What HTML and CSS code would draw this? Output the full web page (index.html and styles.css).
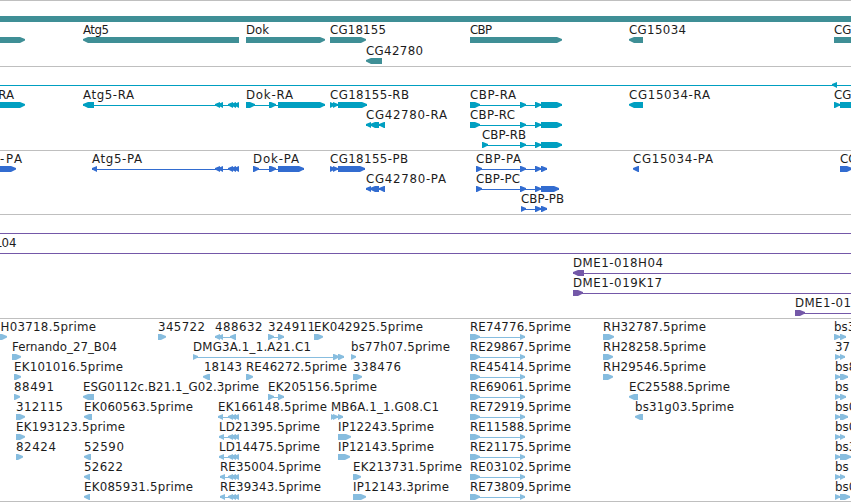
FILE: index.html
```
<!DOCTYPE html>
<html lang="en">
<head>
    <meta charset="UTF-8">
    <title>Genome Browser</title>
    <link rel="stylesheet" href="styles.css">
</head>
<body>
    <main class="browser">
        <svg class="track genes" id="genes" width="851" height="66"></svg>
        <svg class="track transcripts" id="transcripts" width="851" height="84"></svg>
        <svg class="track proteins" id="proteins" width="851" height="64"></svg>
        <svg class="track clones" id="clones" width="851" height="104"></svg>
        <svg class="track ests" id="ests" width="851" height="183"></svg>
    </main>
    <script src="tracks.js"></script>
</body>
</html>
```
FILE: styles.css
```
body {
    margin: 0;
    background-color: #fff;
    overflow: hidden;
}

.browser {
    display: flex;
    flex-direction: column;
    width: 851px;
    height: 502px;
    box-sizing: border-box;
    border-bottom: 1px solid #bfbfbf;
}

.track {
    display: block;
    flex: none;
    overflow: hidden;
}

.divider {
    fill: #bfbfbf;
}

.label {
    font-family: "DejaVu Sans", sans-serif;
    font-size: 11.8px;
    fill: #1c1c1c;
}

/* Track colors */
.genes {
    color: #3f8f96;
}

.transcripts {
    color: #009fc1;
}

.proteins {
    color: #326cd0;
}

.clones {
    color: #7458a8;
}

.ests {
    color: #87bddf;
}

.intron,
.exon {
    fill: currentColor;
}
```
FILE: tracks.js
```
const SVG_NS = "http://www.w3.org/2000/svg";

// feature: [row, label, label start, label end, direction, exons]
// a null label start aligns the text to its end, a null end leaves its natural width
const tracks = {
    genes: {
        top: 37, pitch: 21,
        lines: [{ y: 16, height: 6 }],
        features: [
            [0, "", 0, 0, 1, [[-9, 25]]],
            [0, "Atg5", 83, 109, -1, [[83, 239]]],
            [0, "Dok", 246, 269, 1, [[246, 325]]],
            [0, "CG18155", 330, 386, 1, [[330, 366]]],
            [1, "CG42780", 366, 423, -1, [[366, 382]]],
            [0, "CBP", 470, 492, 1, [[470, 562]]],
            [0, "CG15034", 629, 686, -1, [[629, 643]]],
            [0, "CG", 834, null, 1, [[834, 870]]]
        ]
    },
    transcripts: {
        top: 36, pitch: 20,
        lines: [{ y: 19, height: 1 }],
        features: [
            [-1, "", 0, 0, -1, [[832, 837]]],
            [0, "RA", null, 14, 1, [[-9, 25]]],
            [0, "Atg5-RA", 83, 134, -1, [[83, 94], [215, 220], [218, 223], [228, 233], [231, 236], [234, 239]]],
            [0, "Dok-RA", 246, 293, 1, [[246, 255], [269, 276], [278, 325]]],
            [0, "CG18155-RB", 330, 409, 1, [[330, 335], [333, 338], [338, 367]]],
            [1, "CG42780-RA", 366, 447, -1, [[366, 371], [370, 379], [379, 385]]],
            [0, "CBP-RA", 470, 516, 1, [[470, 480], [520, 526], [535, 541], [541, 562]]],
            [1, "CBP-RC", 470, 515, 1, [[470, 480], [520, 526], [535, 541], [541, 562]]],
            [2, "CBP-RB", 482, 526, 1, [[482, 488], [520, 526], [535, 541], [541, 562]]],
            [0, "CG15034-RA", 629, 710, -1, [[629, 643]]],
            [0, "CG", 834, null, 1, [[834, 840], [840, 870]]]
        ]
    },
    proteins: {
        top: 16, pitch: 20,
        lines: [],
        features: [
            [0, "-PA", 0, 22, 1, [[-9, 16]]],
            [0, "Atg5-PA", 92, 142, -1, [[92, 97], [215, 220], [218, 223], [228, 233], [231, 236], [234, 239]]],
            [0, "Dok-PA", 253, 299, 1, [[253, 259], [269, 276], [278, 304]]],
            [0, "CG18155-PB", 330, 408, 1, [[330, 335], [333, 338], [338, 365]]],
            [1, "CG42780-PA", 366, 446, -1, [[366, 371], [370, 379], [379, 385]]],
            [0, "CBP-PA", 476, 521, 1, [[476, 482], [520, 526], [535, 541], [541, 547]]],
            [1, "CBP-PC", 476, 520, 1, [[476, 482], [520, 526], [535, 541], [541, 559]]],
            [2, "CBP-PB", 521, 564, 1, [[521, 526], [535, 541], [541, 547]]],
            [0, "CG15034-PA", 633, 713, -1, [[633, 639]]],
            [0, "CG", 840, null, 1, [[840, 852]]]
        ]
    },
    clones: {
        top: 16, pitch: 20,
        lines: [{ y: 19, height: 1 }, { y: 39, height: 1 }],
        features: [
            [1, "L04", null, 16.5, 1, []],
            [2, "DME1-018H04", 573, 663, -1, [[573, 584], [860, 870]]],
            [3, "DME1-019K17", 573, 662, 1, [[573, 583], [860, 870]]],
            [4, "DME1-01", 795, 851, 1, [[795, 805], [860, 870]]]
        ]
    },
    ests: {
        top: 16, pitch: 20,
        lines: [],
        features: [
            [0, "H03718.5prime", 0.5, 96, 1, [[-2, 7]]],
            [0, "345722", 158, 205, 1, [[158, 166]]],
            [0, "488632", 215, 262.5, -1, [[215, 220], [218, 223], [230, 236]]],
            [0, "324911", 268, 315, 1, [[268, 274], [278, 284]]],
            [0, "EK042925.5prime", 314, 423, 1, [[314, 323]]],
            [0, "RE74776.5prime", 470, 571, 1, [[470, 480], [520, 525]]],
            [0, "RH32787.5prime", 603, 706, 1, [[603, 614]]],
            [0, "bs3", 834, null, 1, [[834, 840], [840, 846]]],

            [1, "Fernando_27_B04", 12, 117, 1, [[12, 21]]],
            [1, "DMG3A.1_1.A21.C1", 193, 311, 1, [[193, 198], [333, 339], [338, 344]]],
            [1, "bs77h07.5prime", 351, 450, 1, [[351, 356]]],
            [1, "RE29867.5prime", 470, 571, 1, [[470, 480], [520, 525]]],
            [1, "RH28258.5prime", 603, 706, 1, [[603, 613]]],
            [1, "37", 835, null, 1, [[835, 840], [840, 845]]],

            [2, "EK101016.5prime", 14, 123, 1, [[14, 21]]],
            [2, "18143", 204, 242, -1, [[203, 210]]],
            [2, "RE46272.5prime", 246, 347, 1, [[246, 253]]],
            [2, "338476", 353, 401, 1, [[353, 362]]],
            [2, "RE45414.5prime", 470, 571, 1, [[470, 480], [520, 525]]],
            [2, "RH29546.5prime", 603, 706, 1, [[603, 613]]],
            [2, "bs8", 835, null, 1, [[835, 840], [840, 848]]],

            [3, "88491", 14, 54, 1, [[14, 20]]],
            [3, "ESG0112c.B21.1_G02.3prime", 83, 259, -1, [[83, 94]]],
            [3, "EK205156.5prime", 268, 377, 1, [[268, 274], [278, 284]]],
            [3, "RE69061.5prime", 470, 571, 1, [[470, 480], [520, 525]]],
            [3, "EC25588.5prime", 629, 730, -1, [[629, 638]]],
            [3, "bs", 835, null, 1, [[835, 840], [840, 846]]],

            [4, "312115", 16, 63, 1, [[16, 25]]],
            [4, "EK060563.5prime", 84, 193, -1, [[84, 92]]],
            [4, "EK166148.5prime", 218, 327, -1, [[218, 223], [228, 233], [231, 236], [234, 239]]],
            [4, "MB6A.1_1.G08.C1", 331, 439, 1, [[331, 335], [333, 338], [338, 343]]],
            [4, "RE72919.5prime", 470, 571, 1, [[470, 480], [520, 525]]],
            [4, "bs31g03.5prime", 635, 734, -1, [[635, 643]]],
            [4, "bs0", 835, null, 1, [[835, 840], [840, 848]]],

            [5, "EK193123.5prime", 16, 125, 1, [[16, 25]]],
            [5, "LD21395.5prime", 219, 320, -1, [[219, 224], [228, 233], [231, 236], [234, 239]]],
            [5, "IP12243.5prime", 338, 434, 1, [[338, 351]]],
            [5, "RE11588.5prime", 470, 571, 1, [[470, 480], [520, 525]]],
            [5, "bs0", 835, null, 1, [[835, 840], [840, 845]]],

            [6, "82424", 16, 56, 1, [[16, 23]]],
            [6, "52590", 84, 124, -1, [[84, 91]]],
            [6, "LD14475.5prime", 219, 320, -1, [[219, 224], [228, 233], [231, 236], [234, 239]]],
            [6, "IP12143.5prime", 338, 434, 1, [[338, 350]]],
            [6, "RE21175.5prime", 470, 571, 1, [[470, 480], [520, 525]]],
            [6, "bs3", 835, null, 1, [[835, 840], [840, 851]]],

            [7, "52622", 84, 123, -1, [[84, 90]]],
            [7, "RE35004.5prime", 220, 321, -1, [[220, 225], [228, 233], [231, 236], [234, 239]]],
            [7, "EK213731.5prime", 353, 462, 1, [[353, 361]]],
            [7, "RE03102.5prime", 470, 571, 1, [[470, 480], [520, 525]]],
            [7, "bs", 835, null, 1, [[835, 840], [840, 845]]],

            [8, "EK085931.5prime", 84, 193, -1, [[84, 90]]],
            [8, "RE39343.5prime", 220, 321, -1, [[220, 225], [228, 233], [231, 236], [234, 239]]],
            [8, "IP12143.3prime", 353, 449, 1, [[353, 366]]],
            [8, "RE73809.5prime", 470, 571, 1, [[470, 480], [520, 525]]],
            [8, "bs0", 835, null, 1, [[835, 840], [840, 850]]]
        ]
    }
};

function add(parent, name, attrs) {
    const el = document.createElementNS(SVG_NS, name);
    for (const key in attrs) {
        el.setAttribute(key, attrs[key]);
    }
    parent.appendChild(el);
    return el;
}

// Block with a pointed end on the side it is transcribed towards
function drawExon(svg, start, end, y, direction) {
    const head = Math.min(5, end - start);
    const tip = direction > 0 ? end : start;
    const back = direction > 0 ? start : end;
    const neck = tip - head * direction;
    add(svg, "polygon", {
        class: "exon",
        points: `${back},${y} ${neck},${y} ${tip},${y + 2} ${tip},${y + 3.6} ${neck},${y + 6} ${back},${y + 6}`
    });
}

function drawLabel(svg, text, start, end, y) {
    const label = add(svg, "text", { class: "label", x: start === null ? end : start, y: y });
    label.textContent = text;
    if (start === null) {
        label.setAttribute("text-anchor", "end");
    } else if (end !== null) {
        label.setAttribute("textLength", end - start);
    }
}

for (const id in tracks) {
    const track = tracks[id];
    const svg = document.getElementById(id);
    add(svg, "rect", { class: "divider", width: 851, height: 1 });

    track.lines.forEach(line => {
        add(svg, "rect", { class: "intron", y: line.y, width: 851, height: line.height });
    });

    track.features.forEach(([row, text, start, end, direction, exons]) => {
        const y = track.top + row * track.pitch;
        if (exons.length > 1) {
            const first = exons[0][0];
            const last = exons[exons.length - 1][1];
            add(svg, "rect", { class: "intron", x: first, y: y + 3, width: last - first, height: 1 });
        }
        exons.forEach(exon => drawExon(svg, exon[0], exon[1], y, direction));
        if (text) {
            drawLabel(svg, text, start, end, y - 3);
        }
    });
}
```
